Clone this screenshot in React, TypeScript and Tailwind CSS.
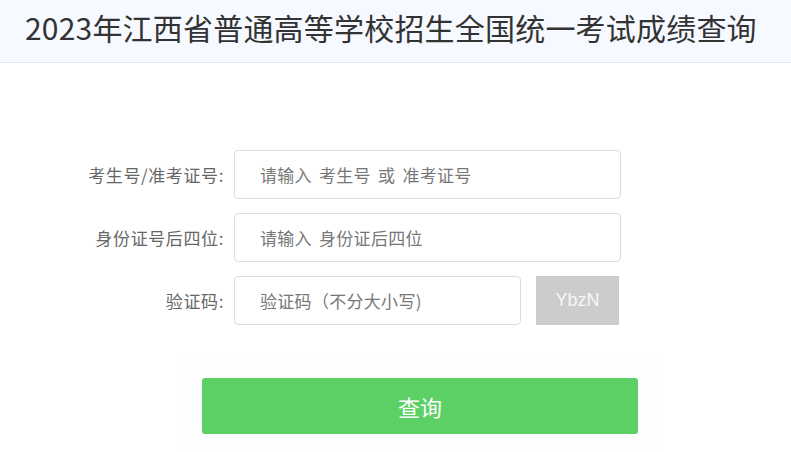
import React from 'react';

const font = { fontFamily: '"Noto Sans CJK SC", "Noto Sans", sans-serif' };

function Field({ label, placeholder, wide = true }: { label: string; placeholder: string; wide?: boolean }) {
  return (
    <div className="flex items-center">
      <label className="w-[225px] pr-[1px] text-right text-[17px] tracking-[0.6px] text-[#666]">{label}</label>
      <input
        placeholder={placeholder}
        className={`ml-[9px] h-[49px] ${wide ? 'w-[387px]' : 'w-[287px]'} rounded-[4px] border border-[#dcdcdc] bg-white pl-[25px] text-[17px] tracking-[0.3px] [word-spacing:3px] text-[#333] placeholder:text-[#777] outline-none`}
      />
    </div>
  );
}

export default function App() {
  return (
    <div className="min-h-[452px] bg-white" style={font}>
      <header className="h-[63px] border-b border-[#dde8fb] bg-[#f6f9ff] pl-[25px]">
        <h1 className="text-[30px] leading-[54px] tracking-[0.2px] text-[#333]">
          2023年江西省普通高等学校招生全国统一考试成绩查询
        </h1>
      </header>

      <form className="flex flex-col gap-[14px] pt-[87px]">
        <Field label="考生号/准考证号:" placeholder="请输入 考生号 或 准考证号" />
        <Field label="身份证号后四位:" placeholder="请输入 身份证后四位" />
        <div className="flex items-center">
          <Field label="验证码:" placeholder="验证码（不分大小写)" wide={false} />
          <div className="ml-[15px] flex h-[49px] w-[83px] items-center justify-center bg-[#cccccc] text-[18px] text-[#f7f7f7]" style={{ fontFamily: '"Liberation Sans", sans-serif' }}>
            YbzN
          </div>
        </div>
      </form>

      <div className="ml-[178px] mt-[34px] w-[484px] bg-[#fdfdfd] px-[24px] pt-[19px] pb-[18px]">
        <button className="h-[56px] w-full rounded-[3px] bg-[#5cd065] text-[22px] text-white">查询</button>
      </div>
    </div>
  );
}
